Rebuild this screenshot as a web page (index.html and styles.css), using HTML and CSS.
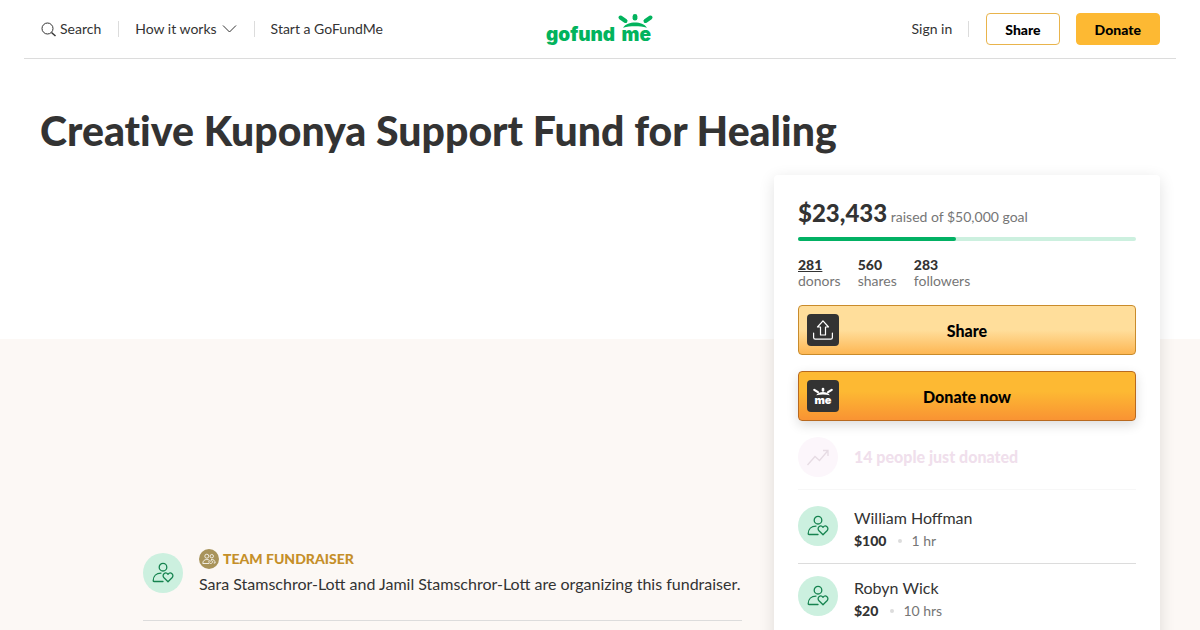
FILE: index.html
```
<!DOCTYPE html>
<html lang="en">
  <head>
    <meta charset="utf-8">
    <meta name="viewport" content="width=device-width, initial-scale=1">
    <title>Creative Kuponya Support Fund for Healing</title>
    <link rel="stylesheet" href="styles.css">
  </head>
  <body>
    <!-- shared icons -->
    <svg class="icon-defs" width="0" height="0" aria-hidden="true">
      <symbol id="icon-person" viewBox="0 0 24 24">
        <g fill="none" stroke="currentColor" stroke-width="1.3" stroke-linecap="round" stroke-linejoin="round">
          <circle cx="12" cy="6.2" r="3.8"/>
          <path d="M12 20.500H3c-.5 0-.8-.3-.8-.8 0-4.600 3.200-7.600 7.800-7.600"/>
          <path d="M17 20.700l-4-4c-2.700-3 1.400-6.500 4-3.500 2.600-3 6.700.5 4 3.500z"/>
        </g>
      </symbol>
    </svg>

    <header class="header">
      <nav class="nav">
        <a class="nav-link" href="#">
          <svg width="16" height="16" viewBox="0 0 16 16" fill="none" stroke="currentColor">
            <circle cx="7.500" cy="7.500" r="5.500"/>
            <path d="M11.500 11.500l4 3.500" stroke-width="1.500"/>
          </svg>
          Search
        </a>
        <button class="nav-link nav-line" type="button">
          How it works
          <svg width="16" height="8" viewBox="0 0 16 8" fill="none" stroke="currentColor">
            <path d="M2 .5L8.500 7 15 .5"/>
          </svg>
        </button>
        <a class="nav-link nav-line" href="#">Start a GoFundMe</a>
      </nav>

      <a class="logo" href="#" aria-label="gofundme">
        <svg width="108" height="36" viewBox="0 0 108 36">
          <text class="logo-text" x="0" y="30">gofund</text>
          <text class="logo-text" x="105" y="30" text-anchor="end">me</text>
          <path fill="#02b35d" d="M77 16.800c2.500-3.800 7-5.300 12-5.300s9.500 1.500 12 5.300c-4-1.200-8-1.500-12-1.500s-8 .3-12 1.500z"/>
          <g stroke="#02b35d" stroke-linecap="round">
            <path d="M89 5.500V7.200" stroke-width="4.800"/>
            <path d="M74.500 6.500l5 3.500M104.500 6.500l-5 3.500" stroke-width="4"/>
          </g>
        </svg>
      </a>

      <div class="nav nav-right">
        <a class="nav-link" href="#">Sign in</a>
        <div class="nav-buttons">
          <button class="small-button" type="button">Share</button>
          <button class="small-button small-donate" type="button">Donate</button>
        </div>
      </div>
    </header>

    <main class="main">
      <h1 class="title">Creative Kuponya Support Fund for Healing</h1>

      <div class="columns">
        <div class="content">
          <div class="gallery"></div>

          <div class="organizer">
            <span class="avatar"><svg width="24" height="24"><use href="#icon-person"/></svg></span>
            <div>
              <div class="team">
                <span class="team-badge">
                  <svg width="14" height="14" viewBox="0 0 14 14" fill="none" stroke="currentColor" stroke-width=".8">
                    <circle cx="4.800" cy="4.200" r="2"/>
                    <circle cx="9.800" cy="4.200" r="1.700"/>
                    <path d="M7 11.500H.8c0-2.500 1.500-4 4-4 1 0 1.700.2 2.200.6M9 7.500c2.500-.4 4 1 4.200 3.500h-1.500M8.700 12L7 10.300c-.8-1.200.8-2.300 1.700-1.100.9-1.200 2.500-.1 1.700 1.100z"/>
                  </svg>
                </span>
                TEAM FUNDRAISER
              </div>
              <div class="organizer-text">Sara Stamschror-Lott and Jamil Stamschror-Lott are organizing this fundraiser.</div>
            </div>
          </div>
        </div>

        <aside class="card">
          <div class="raised"><strong class="amount">$23,433</strong> raised of $50,000 goal</div>
          <div class="progress"><div class="progress-bar" style="width: 46.87%"></div></div>

          <div class="stats">
            <a class="stat" href="#"><strong class="stat-link">281</strong>donors</a>
            <div class="stat"><strong>560</strong>shares</div>
            <div class="stat"><strong>283</strong>followers</div>
          </div>

          <button class="big-button" type="button">
            <span class="button-icon">
              <svg width="20" height="20" viewBox="0 0 20 20" fill="none" stroke="currentColor" stroke-width="1.200" stroke-linejoin="round" stroke-linecap="round">
                <path d="M10 .8L4.500 7h3v8h5V7h3z"/>
                <path d="M.6 13v4.500c0 1 .7 1.700 1.700 1.700h15.400c1 0 1.700-.7 1.700-1.700V13"/>
              </svg>
            </span>
            Share
          </button>
          <button class="big-button big-donate" type="button">
            <span class="button-icon">
              <svg width="20" height="20" viewBox="0 0 20 20">
                <path fill="#fff" d="M3.200 9.300C4.700 6.900 7.200 6 10 6s5.300.9 6.800 3.300C14.600 8.600 12.300 8.400 10 8.400s-4.600.2-6.800.9z"/>
                <g stroke="#fff" stroke-linecap="round">
                  <path d="M10 3v1.500" stroke-width="2.600"/>
                  <path d="M1.300 3.800l3.600 2.400M18.700 3.800l-3.600 2.400" stroke-width="2.200"/>
                </g>
                <text class="me-text" x="10" y="18" text-anchor="middle">me</text>
              </svg>
            </span>
            Donate now
          </button>

          <div class="recent">
            <span class="avatar recent-avatar">
              <svg width="24" height="24" viewBox="0 0 24 24" fill="none" stroke="currentColor" stroke-width="1.300">
                <path d="M1.500 20l7.500-8.500 4.500 4L22 5.500M17 5.500h5V11"/>
              </svg>
            </span>
            14 people just donated
          </div>

          <ul class="donors">
            <li class="donor">
              <span class="avatar"><svg width="24" height="24"><use href="#icon-person"/></svg></span>
              <div>
                <div class="donor-name">William Hoffman</div>
                <div class="donor-info"><strong>$100</strong><span class="dot"></span>1 hr</div>
              </div>
            </li>
            <li class="donor">
              <span class="avatar"><svg width="24" height="24"><use href="#icon-person"/></svg></span>
              <div>
                <div class="donor-name">Robyn Wick</div>
                <div class="donor-info"><strong>$20</strong><span class="dot"></span>10 hrs</div>
              </div>
            </li>
          </ul>
        </aside>
      </div>
    </main>
  </body>
</html>
```
FILE: styles.css
```
* {
  box-sizing: border-box;
}

body {
  margin: 0;
  font-family: Lato, "Liberation Sans", sans-serif;
  font-size: 14px;
  line-height: 16px;
  color: #333;
  background-color: #fff;
}

a {
  color: inherit;
  text-decoration: none;
}

button {
  font-family: inherit;
  cursor: pointer;
}

.icon-defs {
  display: block;
}

/* header */
.header {
  display: grid;
  grid-template-columns: 1fr auto 1fr;
  align-items: center;
  height: 59px;
  margin: 0 24px;
  padding: 0 16px;
  border-bottom: 1px solid #dcdcdc;
}

.nav {
  display: flex;
  align-items: center;
  gap: 17px;
}

.nav-right {
  justify-content: flex-end;
}

.nav-link {
  display: flex;
  align-items: center;
  gap: 4px;
  padding: 0;
  border: none;
  background: none;
  font-size: 14px;
  line-height: 16px;
  color: #333;
}

.nav-line {
  padding-left: 16px;
  border-left: 1px solid #dcdcdc;
}

.logo {
  display: block;
  height: 36px;
}

.logo-text {
  font-family: Inter, sans-serif;
  font-size: 19px;
  font-weight: 900;
  fill: #02b35d;
}

.nav-buttons {
  display: flex;
  gap: 16px;
}

.nav-right .nav-link {
  padding-right: 16px;
  border-right: 1px solid #dcdcdc;
}

.small-button {
  height: 32px;
  padding: 0 18px;
  border: 1px solid #e9b44c;
  border-radius: 4px;
  background-color: #fff;
  font-size: 14px;
  font-weight: 900;
  color: #000;
}

.small-donate {
  border-color: #fdb933;
  background-color: #fdb933;
}

/* page */
.main {
  min-height: calc(100vh - 59px);
  padding: 48px 40px 0;
  background: linear-gradient(#fff 280px, #fcf8f5 280px);
}

.title {
  margin: 0 0 20px;
  font-size: 41px;
  line-height: 48px;
  font-weight: 900;
  font-variant-ligatures: none;
}

.columns {
  display: grid;
  grid-template-columns: minmax(0, 1fr) 386px;
  gap: 32px;
}

.content {
  max-width: 599px;
  width: 100%;
  justify-self: end;
}

.gallery {
  height: 374px;
}

.organizer {
  display: flex;
  align-items: center;
  gap: 16px;
  padding-bottom: 24px;
  border-bottom: 1px solid #dcdcdc;
}

.avatar {
  display: flex;
  flex-shrink: 0;
  align-items: center;
  justify-content: center;
  width: 40px;
  height: 40px;
  border-radius: 50%;
  background-color: #ccf0df;
  color: #15834f;
}

.team {
  display: flex;
  align-items: center;
  gap: 4px;
  font-weight: 900;
  color: #c58f29;
}

.team-badge {
  display: flex;
  align-items: center;
  justify-content: center;
  width: 20px;
  height: 20px;
  border-radius: 50%;
  background-color: #a8935a;
  color: #fff;
}

.organizer-text {
  margin-top: 3px;
  font-size: 16px;
  line-height: 24px;
}

/* donation card */
.card {
  padding: 24px;
  border-radius: 4px;
  background-color: #fff;
  box-shadow: 0 4px 16px rgba(0, 0, 0, 0.12);
}

.raised {
  line-height: 28px;
  color: #767676;
}

.amount {
  font-size: 24px;
  font-weight: 900;
  color: #333;
}

.progress {
  height: 4px;
  margin-top: 6px;
  border-radius: 2px;
  background-color: #ccf0df;
}

.progress-bar {
  height: 4px;
  border-radius: 2px;
  background-color: #02b164;
}

.stats {
  display: flex;
  gap: 17px;
  margin: 16px 0;
}

.stat {
  color: #767676;
}

.stat strong {
  display: block;
  font-weight: 900;
  color: #333;
}

.stat .stat-link {
  text-decoration: underline;
}

.big-button {
  display: flex;
  align-items: center;
  justify-content: center;
  position: relative;
  width: 100%;
  height: 50px;
  margin-bottom: 16px;
  border: 1px solid #c98b2b;
  border-radius: 4px;
  background: linear-gradient(#ffde9b 50%, #fdb754);
  font-size: 16px;
  font-weight: 900;
  color: #000;
}

.big-donate {
  border-color: #b8691f;
  background: linear-gradient(#fdb933 40%, #f99333);
  box-shadow: 0 4px 12px rgba(0, 0, 0, 0.14);
}

.button-icon {
  display: flex;
  align-items: center;
  justify-content: center;
  position: absolute;
  left: 8px;
  width: 32px;
  height: 32px;
  border-radius: 4px;
  background-color: #333;
  color: #fff;
}

.me-text {
  font-family: Inter, sans-serif;
  font-size: 11px;
  font-weight: 900;
  fill: #fff;
}

.recent {
  display: flex;
  align-items: center;
  gap: 16px;
  padding-bottom: 12px;
  border-bottom: 1px solid #f7f7f7;
  font-size: 16px;
  font-weight: 900;
  color: #f0dfec;
}

.recent-avatar {
  background-color: #fcf6fb;
  color: #e6dbe3;
}

.donors {
  margin: 0;
  padding: 0;
  list-style: none;
}

.donor {
  display: flex;
  gap: 16px;
  padding: 12px 0;
  border-bottom: 1px solid #dcdcdc;
}

.donor:first-child {
  padding-top: 16px;
}

.donor-name {
  font-size: 16px;
  line-height: 24px;
}

.donor-info {
  display: flex;
  align-items: center;
  line-height: 21px;
  color: #767676;
}

.donor-info strong {
  font-weight: 900;
  color: #333;
}

.dot {
  width: 4px;
  height: 4px;
  margin: 0 9px 0 12px;
  border-radius: 50%;
  background-color: #dcdcdc;
}
```
